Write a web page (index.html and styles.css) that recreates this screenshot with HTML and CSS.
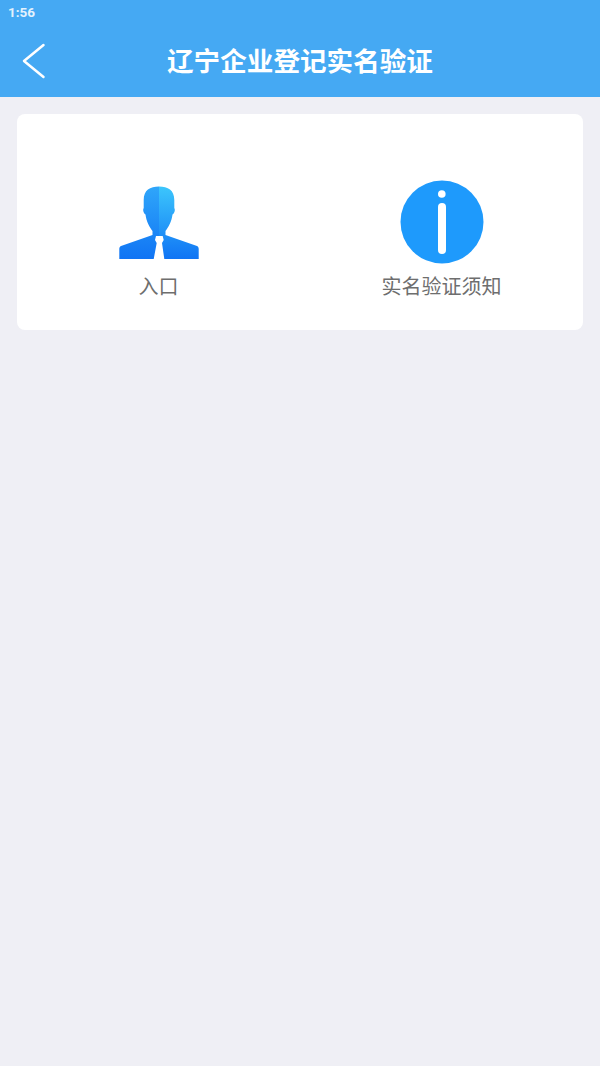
FILE: index.html
```html
<!DOCTYPE html>
<html lang="zh-CN">
<head>
  <meta charset="UTF-8">
  <meta name="viewport" content="width=device-width, initial-scale=1.0">
  <title>辽宁企业登记实名验证</title>
  <link rel="stylesheet" href="styles.css">
</head>
<body>

<div id="topbar">
  <div id="status">1:56</div>
  <div id="header">
    <svg class="back" width="24" height="36" viewBox="0 0 24 36">
      <path d="M21.5 2 L2 18 L21.500 34" fill="none" stroke="#fff" stroke-width="2.500" stroke-linecap="round" stroke-linejoin="round"/>
    </svg>
    <h1>辽宁企业登记实名验证</h1>
  </div>
</div>

<div id="card">
  <div class="item">
    <svg class="icon person" width="80" height="74" viewBox="0 0 80 74">
      <defs>
        <linearGradient id="leftSide" x1="0" y1="0" x2="0" y2="1">
          <stop offset="0" stop-color="#2fa6fa"/>
          <stop offset="1" stop-color="#1074f4"/>
        </linearGradient>
        <linearGradient id="rightSide" x1="0" y1="0" x2="0" y2="1">
          <stop offset="0" stop-color="#3cc6fc"/>
          <stop offset="1" stop-color="#1074f4"/>
        </linearGradient>
      </defs>
      <path fill="url(#leftSide)" d="M40 0.500 C31 0.500 24.700 4 24.700 14 L24.700 22 C23.500 24 24.500 27.500 26.500 28.500 C27.500 36 30.500 41 33.500 45 L33.500 49 L2 60 C0.800 60.500 0.300 61.500 0.300 63 L0.300 73 L34.700 73 L37.700 57 L36 54 L37 50 L40 50 Z"/>
      <path fill="url(#rightSide)" d="M40 0.500 C49 0.500 55.300 4 55.300 14 L55.300 22 C56.500 24 55.500 27.500 53.500 28.500 C52.500 36 49.500 41 46.500 45 L46.500 49 L78 60 C79.200 60.500 79.700 61.500 79.700 63 L79.700 73 L45.300 73 L43 57 L44.700 54 L43.700 50 L40 50 Z"/>
    </svg>
    <span class="label">入口</span>
  </div>
  <div class="item">
    <svg class="icon info" width="84" height="84" viewBox="0 0 84 84">
      <circle cx="42" cy="42" r="41.500" fill="#1e9afc"/>
      <circle cx="41.800" cy="14" r="3.800" fill="#fff"/>
      <rect x="38" y="23" width="8" height="51" rx="4" fill="#fff"/>
    </svg>
    <span class="label">实名验证须知</span>
  </div>
</div>

</body>
</html>
```

FILE: styles.css
```css
body {
  margin: 0;
  height: 1066px;
  overflow: hidden;
  background-color: #efeff5;
  font-family: "Noto Sans CJK SC", "Liberation Sans", sans-serif;
}

#topbar {
  height: 97px;
  background-color: #45a9f3;
  color: #fff;
}

#status {
  height: 25px;
  padding-left: 8px;
  font-family: "Roboto", sans-serif;
  font-size: 13.500px;
  font-weight: 700;
  line-height: 25px;
  color: #e3f2fd;
}

#header {
  height: 72px;
  position: relative;
  display: flex;
  justify-content: center;
  align-items: center;
}

#header h1 {
  margin: 0 0 3px;
  font-size: 26.600px;
  font-weight: 700;
}

.back {
  position: absolute;
  left: 22px;
  top: 18px;
}

#card {
  margin: 17px 17px 0;
  height: 216px;
  display: flex;
  background-color: #fff;
  border-radius: 8px;
}

.item {
  flex: 1;
  display: flex;
  flex-direction: column;
  align-items: center;
  justify-content: flex-end;
  padding-bottom: 30px;
}

.person {
  margin-bottom: 12px;
}

.info {
  margin-bottom: 8px;
}

.label {
  font-size: 20px;
  line-height: 28px;
  color: #6e6e6e;
}
```
